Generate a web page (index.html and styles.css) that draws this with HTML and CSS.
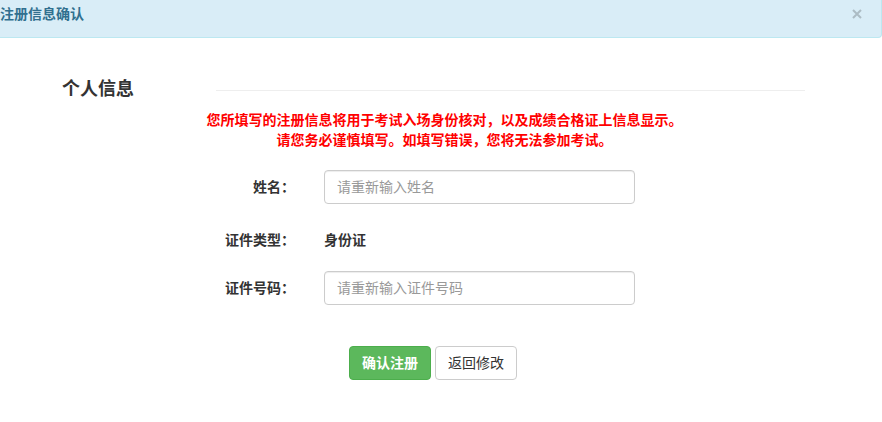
FILE: index.html
```html
<!DOCTYPE html>
<html lang="zh-CN">
<head>
<meta charset="utf-8">
<title>注册信息确认</title>
<link rel="stylesheet" href="styles.css">
</head>
<body>
<div class="alert-head">
  <span class="alert-title">注册信息确认</span>
  <span class="close" aria-label="关闭">
    <svg width="10" height="10" viewBox="0 0 10 10"><path d="M1 1 L9 9 M9 1 L1 9" stroke="#000" stroke-width="2" stroke-linecap="butt"/></svg>
  </span>
</div>

<div class="section-head">
  <h3 class="section-title">个人信息</h3>
  <div class="section-line"></div>
</div>

<div class="notice">
  <p>您所填写的注册信息将用于考试入场身份核对，以及成绩合格证上信息显示。</p>
  <p>请您务必谨慎填写。如填写错误，您将无法参加考试。</p>
</div>

<form class="form">
  <div class="form-row row-1">
    <label class="form-label">姓名：</label>
    <input class="form-control" type="text" placeholder="请重新输入姓名">
  </div>
  <div class="form-row row-2">
    <label class="form-label">证件类型：</label>
    <span class="form-static">身份证</span>
  </div>
  <div class="form-row row-3">
    <label class="form-label">证件号码：</label>
    <input class="form-control" type="text" placeholder="请重新输入证件号码">
  </div>
  <div class="actions">
    <button type="button" class="btn btn-success">确认注册</button>
    <button type="button" class="btn btn-default">返回修改</button>
  </div>
</form>
</body>
</html>
```
FILE: styles.css
```css
* { box-sizing: border-box; }
html, body {
  margin: 0;
  padding: 0;
  background: #fff;
}
body {
  width: 882px;
  height: 422px;
  overflow: hidden;
  font-family: "Liberation Sans", "Noto Sans CJK SC", sans-serif;
  font-size: 14px;
  line-height: 20px;
  color: #333;
}

.alert-head {
  height: 38px;
  background: #d9edf7;
  border-bottom: 1px solid #bce8f1;
  border-right: 1px solid #bce8f1;
  border-bottom-right-radius: 4px;
  display: flex;
  align-items: flex-start;
  justify-content: space-between;
  padding: 4px 0 0 0;
}
.alert-title {
  color: #31708f;
  font-weight: bold;
  font-size: 14px;
  line-height: 20px;
}
.close {
  display: block;
  width: 10px;
  height: 10px;
  margin: 5px 19px 0 0;
  opacity: 0.2;
}
.close svg { display: block; }

.section-head {
  display: flex;
  align-items: center;
  margin-top: 39px;
  padding-left: 62px;
  padding-right: 77px;
  height: 24px;
}
.section-title {
  margin: 0;
  width: 154px;
  font-size: 18px;
  line-height: 24px;
  font-weight: bold;
  color: #333;
}
.section-line {
  flex: 1;
  height: 1px;
  background: #eee;
  margin-top: 2px;
}

.notice {
  margin-top: 9px;
  padding-left: 7px;
  text-align: center;
  color: #f00;
  font-weight: bold;
}
.notice p { margin: 0; line-height: 20px; }

.form { margin: 0; }
.form-row {
  display: flex;
  align-items: center;
  height: 34px;
}
.row-1 { margin-top: 20px; }
.row-2 { margin-top: 19px; }
.row-3 { margin-top: 14px; }
.form-label {
  width: 295px;
  text-align: right;
  font-weight: bold;
  color: #333;
}
.form-control {
  margin-left: 29px;
  width: 311px;
  height: 34px;
  padding: 6px 12px;
  font-family: inherit;
  font-size: 14px;
  line-height: 20px;
  color: #555;
  background: #fff;
  border: 1px solid #ccc;
  border-radius: 4px;
  box-shadow: inset 0 1px 1px rgba(0,0,0,.075);
  outline: none;
}
.form-control::placeholder { color: #999; }
.form-static {
  margin-left: 29px;
  font-weight: bold;
  color: #333;
}

.actions {
  margin-top: 41px;
  padding-left: 349px;
  display: flex;
  gap: 4px;
}
.btn {
  height: 34px;
  padding: 6px 12px;
  font-family: inherit;
  font-size: 14px;
  line-height: 20px;
  border: 1px solid transparent;
  border-radius: 4px;
  cursor: pointer;
}
.btn-success {
  background: #5cb85c;
  border-color: #4cae4c;
  color: #fff;
  font-weight: bold;
}
.btn-default {
  background: #fff;
  border-color: #ccc;
  color: #333;
}
```
